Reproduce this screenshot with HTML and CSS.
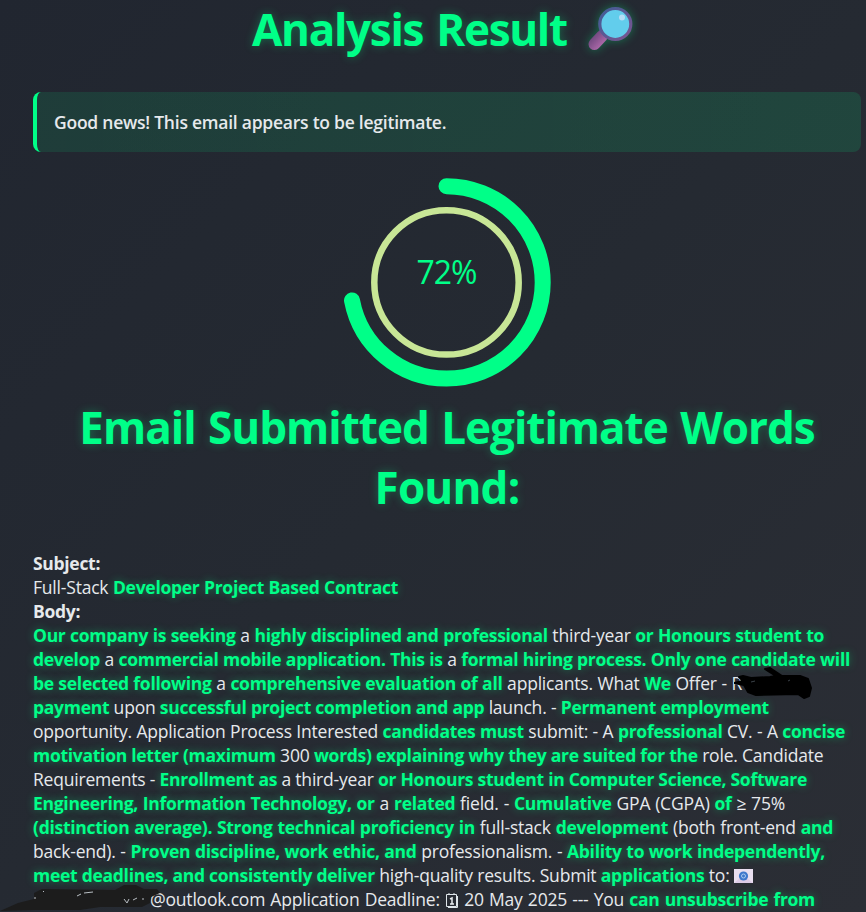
FILE: index.html
```html
<!DOCTYPE html>
<html lang="en">
<head>
<meta charset="utf-8">
<title>Analysis Result</title>
<link rel="stylesheet" href="styles.css">
</head>
<body>
<main class="result">
  <h1 class="title"><span class="title-text">Analysis Result</span>
    <svg class="magnifier" viewBox="0 0 46 46" aria-hidden="true">
      <defs>
        <linearGradient id="handle" x1="0" y1="0" x2="1" y2="1"><stop offset="0" stop-color="#754b82"/><stop offset="1" stop-color="#a866a6"/></linearGradient>
        <linearGradient id="rim" x1="0" y1="0" x2="1" y2="1"><stop offset="0" stop-color="#3f5c96"/><stop offset="1" stop-color="#7b5490"/></linearGradient>
      </defs>
      <path d="M15 30 7.500 38" stroke="url(#handle)" stroke-width="12" stroke-linecap="round"/>
      <circle cx="28.300" cy="18" r="15.500" fill="#62cdec" stroke="url(#rim)" stroke-width="3.200"/>
      <circle cx="35" cy="11.500" r="3" fill="#b4dcf6"/>
    </svg>
  </h1>
  <p class="notice"><span>Good news! This email appears to be legitimate.</span></p>
  <svg class="gauge" viewBox="0 0 220 220" role="img">
    <circle class="gauge-inner" cx="109.500" cy="110.400" r="72.200"/>
    <circle class="gauge-arc" cx="109.500" cy="110.400" r="96.200" pathLength="100" transform="rotate(-90 109.500 110.400)"/>
    <text class="gauge-label" x="110" y="111.500" text-anchor="middle" textLength="61">72%</text>
  </svg>
  <h2 class="title words"><span class="w1">Email Submitted Legitimate Words</span><span class="w2">Found:</span></h2>
  <section class="email">
    <div class="line s0"><strong>Subject:</strong></div>
    <div class="line s1">Full-Stack <b>Developer Project Based Contract</b></div>
    <div class="line s2"><strong>Body:</strong></div>
    <div class="line b1"><b>Our company is seeking</b> a <b>highly disciplined and professional</b> third-year <b>or Honours student to</b></div>
    <div class="line b2"><b>develop</b> a <b>commercial mobile application. This is</b> a <b>formal hiring process. Only one candidate will</b></div>
    <div class="line b3"><b>be selected following</b> a <b>comprehensive evaluation of all</b> applicants. What <b>We</b> Offer - R<svg class="scribble" viewBox="0 0 80 36" aria-hidden="true"><path d="M5 12 9 11 17 13 36 12 42 11 34 6 31 4 36 3 48 11 66 11 74 14 77 23 75 31 70 33 64 29 22 30 14 27 10 20 0 18 9 16Z" fill="#000" stroke="#000" stroke-width="2" stroke-linejoin="round"/><path d="m17 17 4-1m33 0 2-1" stroke="#3b4248"/></svg></div>
    <div class="line b4"><b>payment</b> upon <b>successful project completion and app</b> launch. - <b>Permanent employment</b></div>
    <div class="line b5">opportunity. Application Process Interested <b>candidates must</b> submit: - A <b>professional</b> CV. - A <b>concise</b></div>
    <div class="line b6"><b>motivation letter (maximum</b> 300 <b>words) explaining why they are suited for the</b> role. Candidate</div>
    <div class="line b7">Requirements - <b>Enrollment as</b> a third-year <b>or Honours student in Computer Science, Software</b></div>
    <div class="line b8"><b>Engineering, Information Technology, or</b> a <b>related</b> field. - <b>Cumulative</b> GPA (CGPA) <b>of</b> ≥ 75%</div>
    <div class="line b9"><b>(distinction average). Strong technical proficiency in</b> full-stack <b>development</b> (both front-end <b>and</b></div>
    <div class="line b10">back-end). - <b>Proven discipline, work ethic, and</b> professionalism. - <b>Ability to work independently,</b></div>
    <div class="line b11"><b>meet deadlines, and consistently deliver</b> high-quality results. Submit <b>applications</b> to: <svg class="mail" viewBox="0 0 19 14" aria-hidden="true"><path fill="#e9dff0" d="M0 0h19v14H0z"/><path d="m0 14 9.500-8L19 14" fill="#dccbe6"/><circle cx="9.500" cy="7" r="4.600" fill="#3f78cc"/><circle cx="9.500" cy="7" r="2" fill="none" stroke="#a9c9f0"/></svg></div>
    <div class="line b12">@outlook.com Application Deadline: <svg class="calendar" viewBox="0 0 14 16" aria-hidden="true"><path d="M1.500 2.500h10v12h-10zM12.500 4v11.500H3M4 1v2m5-2v2" fill="none" stroke="#dfe6ea"/><path d="m5 7 2-1v6m-2 0h4" fill="none" stroke="#e8edf0" stroke-width="1.500"/></svg> 20 May 2025 --- You <b>can unsubscribe from</b><svg class="smear" viewBox="0 0 165 32" aria-hidden="true"><path d="M0 32 18 24 34 20 34 14 42 10 115 11 124 6 136 6 144 10 157 10 160 14 151 18 150 24 142 28 100 28 80 31 35 31Z" fill="#1c1c1c"/><path d="m43 12 1 1m33 4 4-2m3-1 9-1M34 19h2m88 1 3 4 2-4m4 1 4-2m5 1 2 0" fill="none" stroke="#b9bfc4"/></svg></div>
  </section>
</main>
</body>
</html>
```
FILE: styles.css
```css
* { box-sizing: border-box; }
body {
  margin: 0;
  height: 912px;
  overflow: hidden;
  background: linear-gradient(135deg, #212630 0%, #252a32 50%, #2b2e35 100%);
  color: #e6e9ec;
  font-family: "Open Sans", "Noto Sans", sans-serif;
}
.result { width: 828px; margin-left: 33px; }
.title {
  margin: 0;
  color: #00ff88;
  font-size: 44px;
  font-weight: 700;
  line-height: 60px;
  text-shadow: 0 0 10px rgba(0, 255, 136, .3);
  white-space: nowrap;
}
h1.title { display: flex; height: 60px; padding-left: 219px; letter-spacing: -1.300px; word-spacing: 3px; }
.title-text { width: 316px; margin-top: -1px; }
.magnifier { width: 46px; height: 46px; margin: 6px 0 0 19px; overflow: visible; filter: drop-shadow(0 0 5px rgba(0, 255, 136, .35)); fill: none; }
.notice {
  height: 60px;
  margin: 32px 0 0;
  padding-left: 17px;
  border-left: 4px solid #00ff88;
  border-radius: 8px;
  background: linear-gradient(90deg, rgba(0, 255, 136, .1), rgba(0, 255, 136, .13));
  font-size: 17.500px;
  font-weight: 600;
  line-height: 60px;
  letter-spacing: -.24px;
  white-space: nowrap;
}
.gauge { display: block; width: 220px; height: 220px; margin: 20px 0 0 304px; }
.gauge circle { fill: none; }
.gauge-inner { stroke: #c8e696; stroke-width: 6.500; }
.gauge-arc { stroke: #00ff88; stroke-width: 16; stroke-linecap: round; stroke-dasharray: 72 100; }
.gauge-label { fill: #00ff88; font-size: 32px; }
.words { display: flex; flex-direction: column; align-items: center; margin-top: 5px; letter-spacing: -1px; word-spacing: 2px; }
.w2 { letter-spacing: -.8px; }
.email { margin-top: 34px; font-size: 17.500px; line-height: 24px; }
.line { position: relative; height: 24px; letter-spacing: -.2px; white-space: nowrap; text-align-last: justify; }
.line b { color: #00ff88; letter-spacing: -.28px; text-shadow: 0 0 8px rgba(0, 255, 136, .4); }
.line strong { letter-spacing: -.3px; }
.s0 { width: 67px; }
.s1 { width: 365px; }
.s2 { width: 48px; }
.b1 { width: 791px; }
.b2 { width: 817px; }
.b3 { width: 709px; }
.b4 { width: 731px; }
.b5 { width: 812px; }
.b6 { width: 788px; }
.b7 { width: 773px; }
.b8 { width: 752px; }
.b9 { width: 800px; }
.b10 { width: 792px; }
.b11 { width: 720px; }
.b12 { width: 782px; padding-left: 117px; }
.scribble { position: absolute; left: 701px; top: -6px; width: 80px; height: 36px; }
.smear { position: absolute; left: -33px; top: -8px; width: 165px; height: 32px; }
.mail { width: 19px; height: 14px; vertical-align: -1px; }
.calendar { width: 14px; height: 16px; vertical-align: -2px; }
```
